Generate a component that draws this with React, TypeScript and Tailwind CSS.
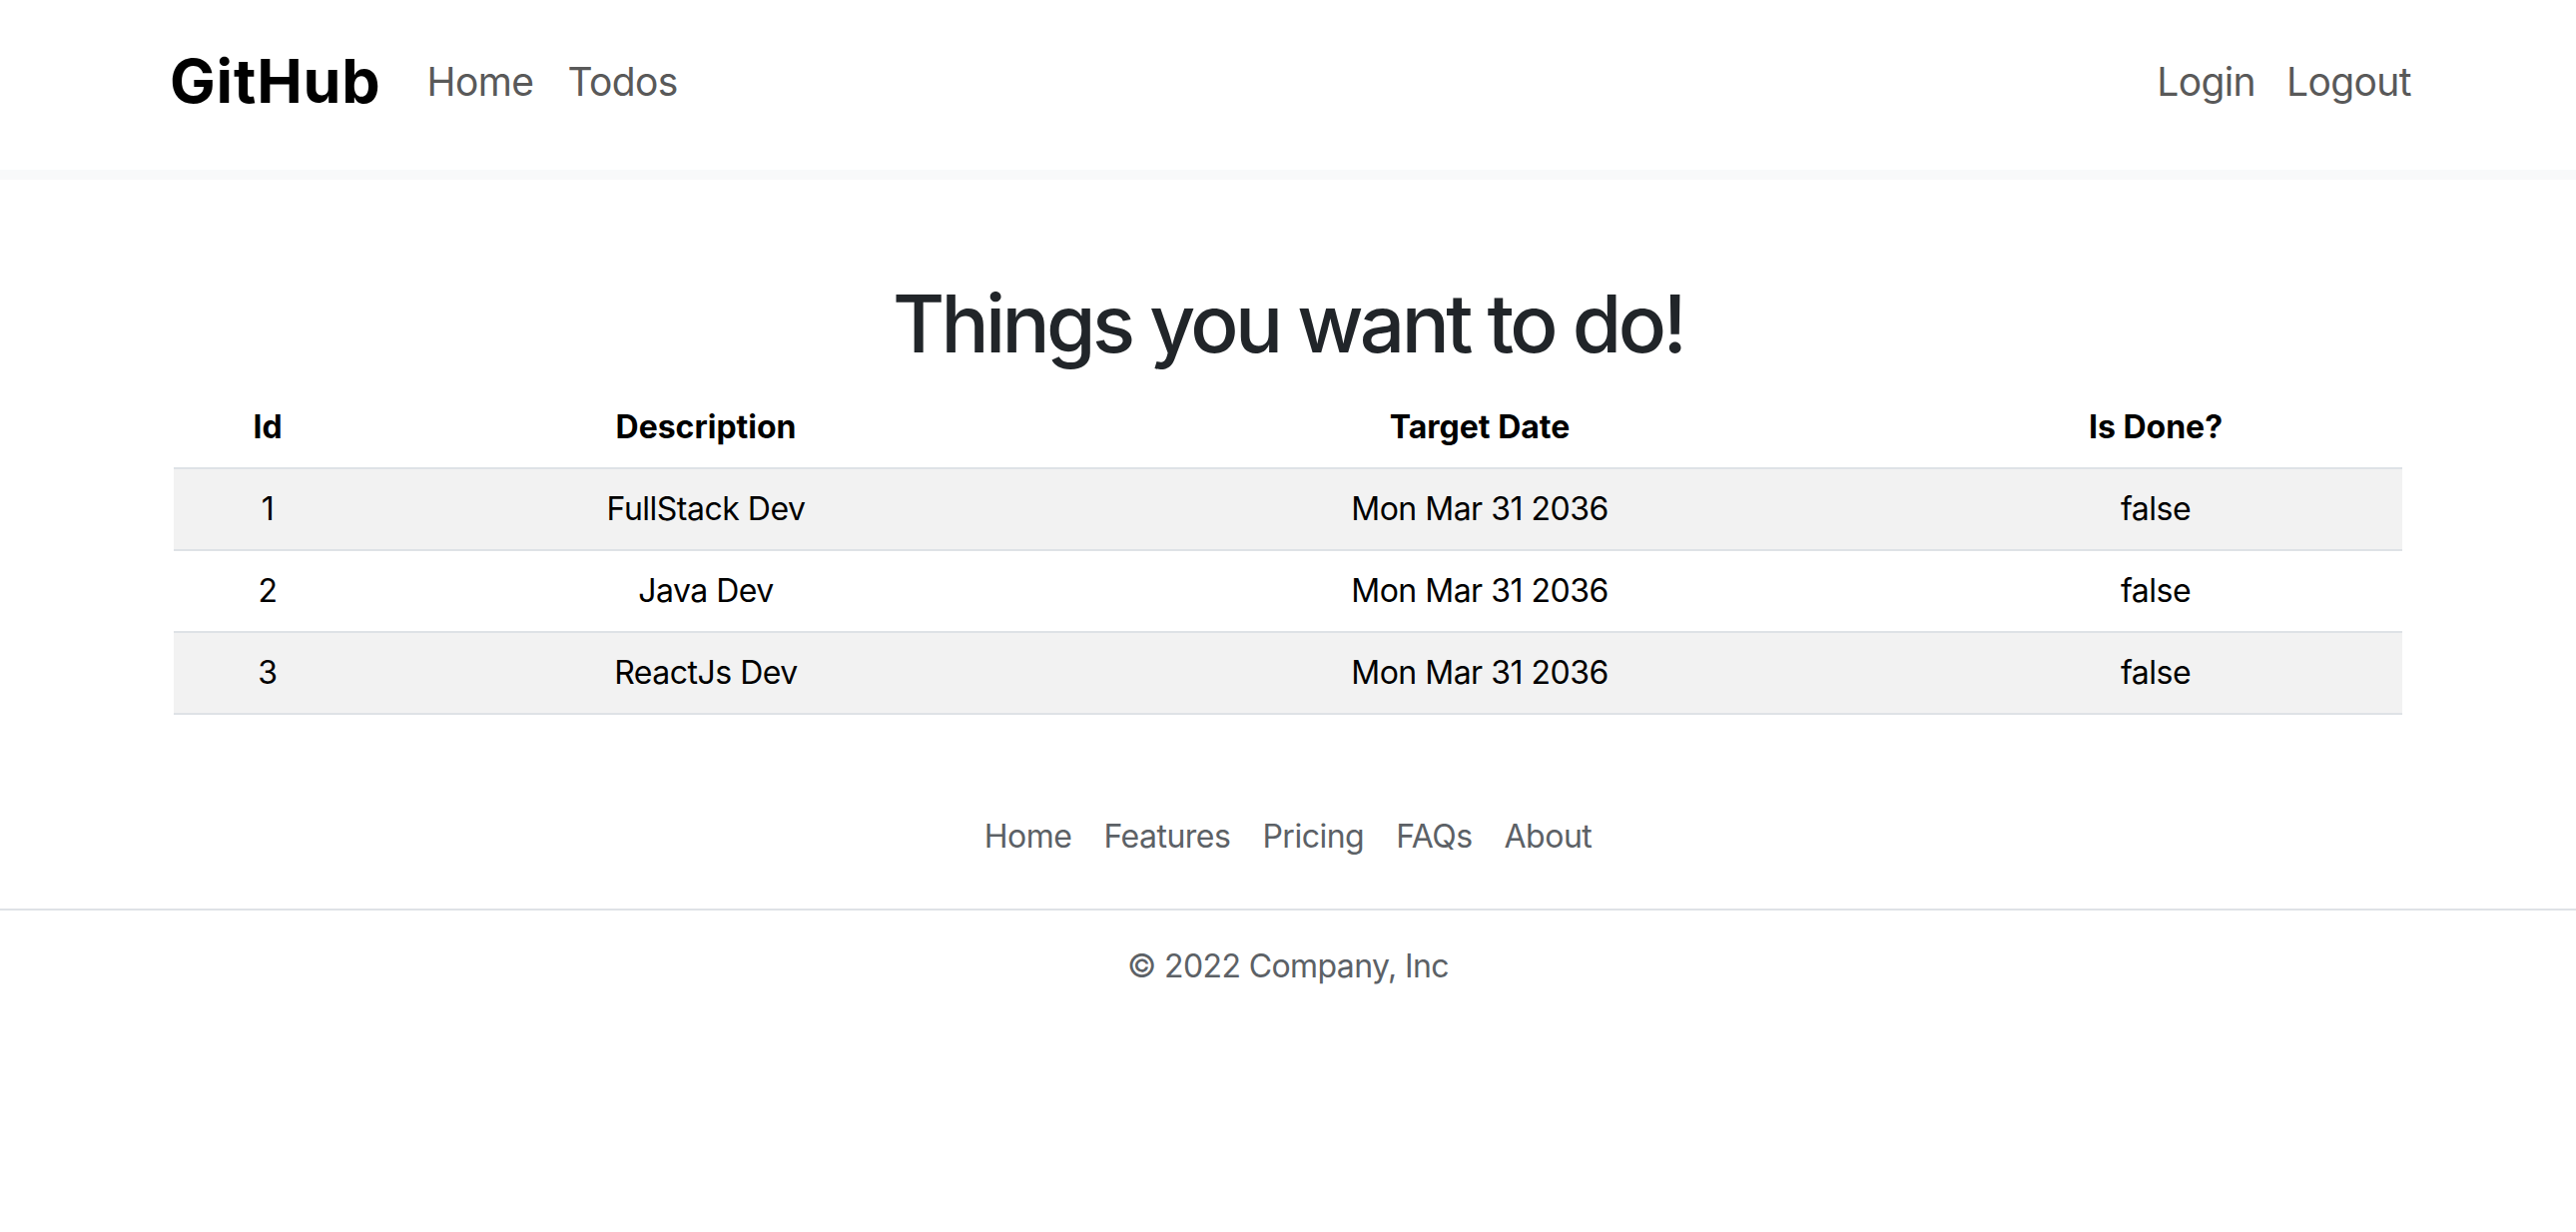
import React from "react";

type todo = {
  id: number;
  description: string;
  targetDate: string;
  done: boolean;
};

const todos: todo[] = [
  { id: 1, description: "FullStack Dev", targetDate: "Mon Mar 31 2036", done: false },
  { id: 2, description: "Java Dev", targetDate: "Mon Mar 31 2036", done: false },
  { id: 3, description: "ReactJs Dev", targetDate: "Mon Mar 31 2036", done: false },
];

const footerLinks = ["Home", "Features", "Pricing", "FAQs", "About"];

const Header = () => {
  return (
    <header className="border-b-[10px] border-[#f8f9fa]">
      <nav className="h-[170px] pb-[8px] pl-[170px] pr-[165px] flex items-center justify-between">
        <div className="flex items-center">
          <a href="#" className="text-[61px] font-bold leading-none text-black tracking-[0.8px]">GitHub</a>
          <ul className="flex items-center gap-[34px] ml-[46px] text-[39px] leading-none text-[#595959] tracking-[-0.6px]">
            <li><a href="#">Home</a></li>
            <li><a href="#">Todos</a></li>
          </ul>
        </div>
        <ul className="flex items-center gap-[31px] text-[39px] leading-none text-[#595959] tracking-[-0.6px]">
          <li><a href="#">Login</a></li>
          <li><a href="#">Logout</a></li>
        </ul>
      </nav>
    </header>
  );
};

const TodoTable = () => {
  return (
    <table className="w-full table-fixed border-collapse text-[32px] leading-[48px] text-black text-center">
      <colgroup>
        <col className="w-[188px]" />
        <col className="w-[690px]" />
        <col className="w-[860px]" />
        <col className="w-[494px]" />
      </colgroup>
      <thead>
        <tr className="border-b-2 border-[#dee2e6]">
          <th className="py-[16px] font-bold">Id</th>
          <th className="py-[16px] font-bold">Description</th>
          <th className="py-[16px] font-bold">Target Date</th>
          <th className="py-[16px] font-bold">Is Done?</th>
        </tr>
      </thead>
      <tbody className="tracking-[-0.5px]">
        {todos.map((t, i) => (
          <tr key={t.id} className={`border-b-2 border-[#dee2e6] ${i % 2 === 0 ? "bg-[#f2f2f2]" : "bg-white"}`}>
            <td className="py-[16px]">{t.id}</td>
            <td className="py-[16px]">{t.description}</td>
            <td className="py-[16px]">{t.targetDate}</td>
            <td className="py-[16px]">{t.done.toString()}</td>
          </tr>
        ))}
      </tbody>
    </table>
  );
};

const Footer = () => {
  return (
    <footer className="mt-[82px]">
      <ul className="flex justify-center border-b-2 border-[#dee2e6] pb-[32px]">
        {footerLinks.map((l) => (
          <li key={l}>
            <a href="#" className="block px-[16px] py-[16px] text-[32px] leading-[48px] text-[#5c6166] tracking-[-0.5px]">{l}</a>
          </li>
        ))}
      </ul>
      <p className="mt-[32px] text-center text-[32px] leading-[48px] text-[#5c6166] tracking-[-0.6px]">© 2022 Company, Inc</p>
    </footer>
  );
};

export default function App() {
  return (
    <div className="min-h-[1234px] bg-white font-['Inter',sans-serif]">
      <Header />
      <main className="w-[2232px] mx-auto pt-[96px]">
        <h1 className="text-[80px] font-medium leading-[96px] text-[#212529] text-center mb-[16px] tracking-[-3.6px]">Things you want to do!</h1>
        <TodoTable />
      </main>
      <Footer />
    </div>
  );
}
